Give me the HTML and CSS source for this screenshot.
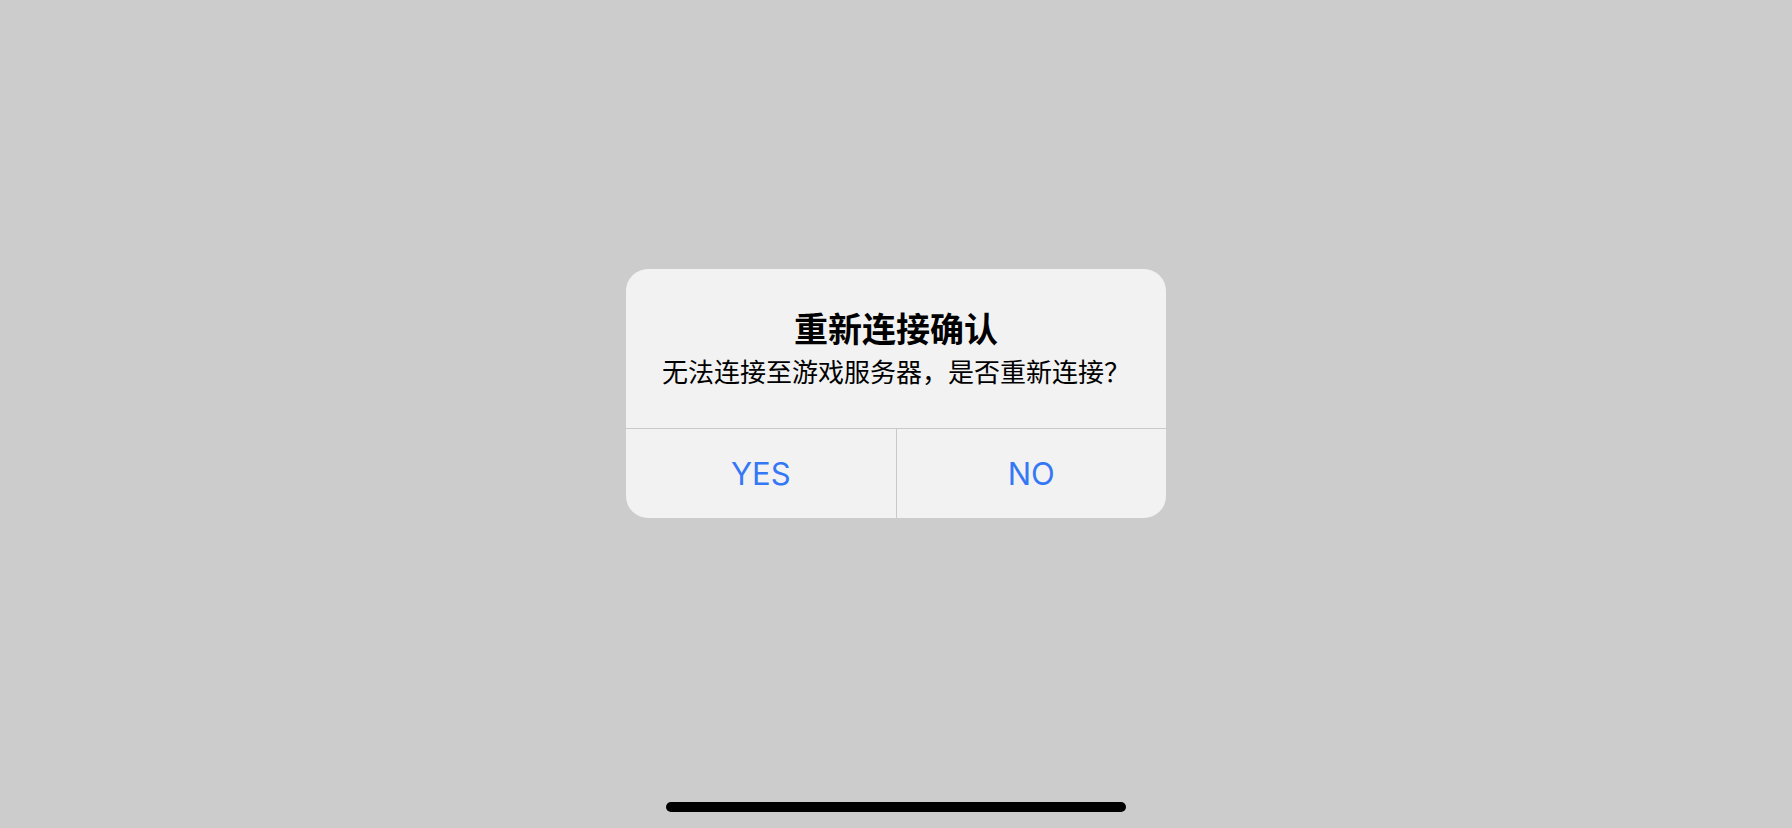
FILE: index.html
```html
<!DOCTYPE html>
<html lang="zh-CN">
<head>
  <meta charset="UTF-8" />
  <title>重新连接确认</title>
  <link rel="stylesheet" href="styles.css">
</head>
<body>
  <div class="screen">
    <div class="alert">
      <div class="alert-body">
        <div class="alert-title">重新连接确认</div>
        <div class="alert-msg">无法连接至游戏服务器，是否重新连接？</div>
      </div>
      <div class="alert-actions">
        <button class="btn">YES</button>
        <button class="btn">NO</button>
      </div>
    </div>
    <div class="home-bar"></div>
  </div>
</body>
</html>
```

FILE: styles.css
```css
html, body { margin: 0; padding: 0; background: #cccccc; }
body { font-family: "Noto Sans CJK SC", "Noto Sans", sans-serif; }
.screen { height: 828px; display: flex; flex-direction: column; align-items: center; padding-top: 269px; box-sizing: border-box; }
.alert { width: 540px; background: #f2f2f2; border-radius: 22px; overflow: hidden; }
.alert-body { padding: 38px 20px 35px; text-align: center; color: #000; }
.alert-title { font-size: 34px; line-height: 42px; font-weight: 700; }
.alert-msg { font-size: 26px; line-height: 44px; }
.alert-actions { display: flex; border-top: 1px solid #c9c9c9; }
.btn { flex: 1; height: 89px; border: 0; background: transparent; color: #3478f6; font-family: Inter, Roboto, sans-serif; font-size: 31px; padding: 0; }
.btn + .btn { border-left: 1px solid #c9c9c9; }
.home-bar { margin-top: auto; margin-bottom: 16px; width: 460px; height: 10px; border-radius: 5px; background: #000; }
```
